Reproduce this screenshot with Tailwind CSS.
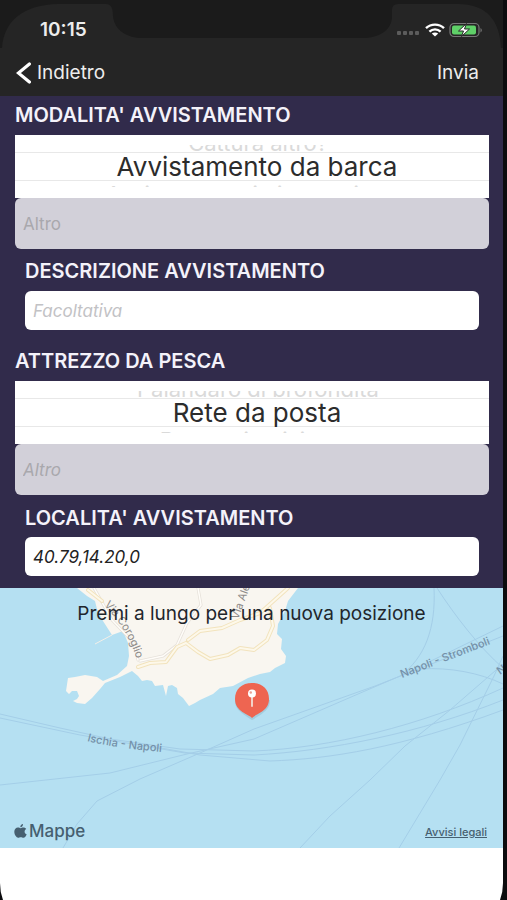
<!DOCTYPE html>
<html lang="it">
<head>
    <meta charset="UTF-8">
    <meta name="viewport" content="width=device-width, initial-scale=1.0">
    <title>Avvistamento</title>
    <script src="https://cdn.jsdelivr.net/npm/@tailwindcss/browser@4"></script>
</head>
<body class="bg-[#0c0c0e] font-['Inter','Liberation_Sans',sans-serif]">
    <div class="relative min-h-screen mr-1 flex flex-col bg-white">

        <!-- Header -->
        <header class="relative bg-[#252525] text-[#ededed]">
            <svg class="absolute inset-x-0 top-0 w-full h-12" viewBox="0 0 503 48" preserveAspectRatio="none" aria-hidden="true">
                <path fill="#1b1b1b" d="M0 0H503V48H501C500 20 486 4 458 4H398Q392 4 392 10V16C392 30 380 38 362 38H140C124 37 114 28 113 16C113 8 111 4 106 4H58C24 5 4 20 2 48H0Z"/>
            </svg>
            <div class="relative h-12 pt-3 pl-10 pr-5 flex items-center justify-between">
                <span class="text-[19px] font-semibold">10:15</span>
                <div class="flex items-center gap-1">
                    <svg width="24" height="14" viewBox="0 0 24 14" fill="#5c5c5c" aria-hidden="true">
                        <rect x="0" y="8" width="4" height="4" rx="1"/>
                        <rect x="6" y="8" width="4" height="4" rx="1"/>
                        <rect x="12" y="8" width="4" height="4" rx="1"/>
                        <rect x="18" y="8" width="4" height="4" rx="1"/>
                    </svg>
                    <svg width="20" height="14" viewBox="0 0 20 14" fill="none" stroke="#fff" stroke-width="2.4" aria-hidden="true">
                        <path d="M1 5.2C6 .4 14 .4 19 5.2"/>
                        <path d="M4.4 8.6C7.6 5.6 12.4 5.6 15.6 8.6"/>
                        <path fill="#fff" stroke="none" d="M10 13.4L6.8 10.5C8.6 9 11.4 9 13.2 10.5Z"/>
                    </svg>
                    <svg width="34" height="16" viewBox="0 0 34 16" aria-hidden="true">
                        <rect x="1" y="1.5" width="29" height="13" rx="4" fill="none" stroke="#777" stroke-width="1.2"/>
                        <rect x="3" y="3.5" width="24" height="9" rx="2" fill="#5fd068"/>
                        <path d="M31.5 6V10.5C33.3 9.6 33.3 6.9 31.5 6Z" fill="#777"/>
                        <path d="M17.5 1.5L9.5 9H14.5L12.5 14.5L20.5 7H15.5Z" fill="#fff" stroke="#252525" stroke-width="1"/>
                    </svg>
                </div>
            </div>
            <nav class="relative h-12 pt-0.5 pl-4 pr-6 flex items-center justify-between">
                <a href="#" class="flex items-center gap-1.5 text-[19px]">
                    <svg width="15" height="22" viewBox="0 0 15 22" fill="none" stroke="#fff" stroke-width="3.2" stroke-linecap="round" stroke-linejoin="miter" aria-hidden="true">
                        <path d="M13.4 2L2.4 11L13.4 20"/>
                    </svg>
                    Indietro
                </a>
                <button type="submit" form="reportForm" class="text-[19px]">Invia</button>
            </nav>
        </header>

        <!-- Form -->
        <form id="reportForm" class="bg-[#312b4b] pl-[15px] pr-3.5 pb-3">
            <h2 id="modeLabel" class="h-[39px] pb-0.5 flex items-center text-xl font-semibold text-[#f4f2fa]">MODALITA' AVVISTAMENTO</h2>
            <div role="listbox" aria-labelledby="modeLabel" class="h-[63px] bg-white text-center whitespace-nowrap overflow-hidden">
                <div role="option" class="h-[18px] pt-2.5 pl-3 border-b border-[#e8e8e8]">
                    <div class="h-1.5 flex items-end justify-center overflow-hidden text-[22px] leading-4 text-[#dadada]">Cattura altro?</div>
                </div>
                <div role="option" aria-selected="true" class="h-7 pl-2.5 border-b border-[#e8e8e8] text-[26px] leading-7 text-[#2c2c2c]">Avvistamento da barca</div>
                <div role="option" class="pt-1">
                    <div class="h-0.5 overflow-hidden text-[22px] leading-[18px] text-[#dadada]">Avvistamento in immersione</div>
                </div>
            </div>
            <input type="text" aria-label="Altra modalità" placeholder="Altro" class="block w-full h-[51px] px-2 rounded-md bg-[#d2d0d9] text-[17px] placeholder:text-[#a9a8ad]">

            <div class="pl-2.5 pr-2.5">
                <label for="description" class="h-[42px] pt-0.5 flex items-center text-xl font-semibold text-[#f4f2fa]">DESCRIZIONE AVVISTAMENTO</label>
                <input type="text" id="description" placeholder="Facoltativa" class="block w-full h-[39px] px-2 rounded-md bg-white text-[17px] italic placeholder:text-[#c2c2c5]">
            </div>

            <h2 id="gearLabel" class="h-[51px] pt-2.5 flex items-center text-xl font-semibold text-[#f4f2fa]">ATTREZZO DA PESCA</h2>
            <div role="listbox" aria-labelledby="gearLabel" class="h-[63px] bg-white text-center whitespace-nowrap overflow-hidden">
                <div role="option" class="h-[18px] pt-2.5 pl-3 border-b border-[#e8e8e8]">
                    <div class="h-1.5 flex items-end justify-center overflow-hidden text-[22px] leading-4 text-[#dadada]">Palangaro di profondità</div>
                </div>
                <div role="option" aria-selected="true" class="h-7 pl-2.5 border-b border-[#e8e8e8] text-[26px] leading-7 text-[#2c2c2c]">Rete da posta</div>
                <div role="option" class="pt-1">
                    <div class="h-0.5 overflow-hidden text-[22px] leading-[18px] text-[#dadada]">Rete a circuizione</div>
                </div>
            </div>
            <input type="text" aria-label="Altro attrezzo" placeholder="Altro" class="block w-full h-[51px] px-2 rounded-md bg-[#d2d0d9] text-[17px] italic placeholder:text-[#a9a8ad]">

            <div class="pl-2.5 pr-2.5">
                <label for="location" class="h-[42px] pt-1 flex items-center text-xl font-semibold text-[#f4f2fa]">LOCALITA' AVVISTAMENTO</label>
                <input type="text" id="location" value="40.79,14.20,0" class="block w-full h-[39px] px-2 rounded-md bg-white text-[17px] italic text-[#222]">
            </div>
        </form>

        <!-- Map -->
        <section class="relative h-[260px] px-3.5 pt-3.5 pb-1 flex flex-col justify-between overflow-hidden bg-[#b5e0f2]">
            <svg class="absolute inset-0 w-full h-full" viewBox="0 0 503 260" preserveAspectRatio="xMidYMid slice" aria-hidden="true">
                <!-- ferry routes -->
                <g fill="none" stroke="#a4cee8" stroke-width="1">
                    <path d="M0 126L60 140L110 151L180 161L254 163C330 160 420 138 503 100"/>
                    <path d="M0 130L80 147L185 165L254 167C330 163 420 145 503 112"/>
                    <path d="M150 158L200 167L270 173C330 171 400 160 503 122"/>
                    <path d="M0 197L110 185L187 166L254 151L365 103L400 88L503 38"/>
                    <path d="M63 260L77 236L97 213L140 191L200 165L254 141L375 98L503 48"/>
                    <path d="M434 0C436 40 425 70 400 88M437 0C455 28 480 60 503 80"/>
                    <path d="M420 81C450 79 480 85 503 96"/>
                    <path d="M300 260L330 228L370 192L405 158L450 122L503 76"/>
                    <path d="M399 260L440 192L460 157L494 88L503 68"/>
                </g>
                <!-- coast -->
                <path fill="#f9f6f0" d="M77 0L87 8L95 13L97 21L103 33L112 47L123 43L128 55L129 68L127 78L117 87L103 93L97 89L85 87L75 89L68 90L66 103L69 106L72 103L77 103L79 108L77 111L73 113L77 115L85 116L92 110L100 101L105 95L120 89L132 83L138 88L142 93L147 92L152 93L155 98L163 97L166 108L168 98L172 97L177 100L178 106L183 110L189 118L195 115L200 112L213 106L220 100L233 98L248 90L260 86L270 84L275 80L285 75L286 68L281 61L282 51L277 46L278 36L285 23L288 13L298 0Z"/>
                <path fill="none" stroke="#f3efe8" stroke-width="1" d="M95 56L112 47"/>
                <!-- roads -->
                <g fill="none" stroke-linejoin="round" stroke-linecap="round">
                    <path stroke="#e6e1da" stroke-width="3" d="M198 0L201 17L187 35L177 57L163 68L140 73M94 0L112 32L134 55L138 72"/>
                    <path stroke="#fffdf9" stroke-width="1.5" d="M198 0L201 17L187 35L177 57L163 68L140 73M94 0L112 32L134 55L138 72"/>
                    <path stroke="#f2e3bd" stroke-width="4" d="M138 79L150 75L166 74L177 59L186 55L198 64L210 71L228 67L240 60L254 62L267 52L273 38L270 20M188 52L200 43L222 40L240 32L260 25L278 9L288 0M88 2L102 13"/>
                    <path stroke="#fdf8ea" stroke-width="2" d="M138 79L150 75L166 74L177 59L186 55L198 64L210 71L228 67L240 60L254 62L267 52L273 38L270 20M188 52L200 43L222 40L240 32L260 25L278 9L288 0M88 2L102 13"/>
                </g>
                <!-- names on the map -->
                <defs>
                    <path id="coroglio" d="M104 17C117 31 128 45 136 69"/>
                    <path id="alessandro" d="M238 32L258 -24"/>
                    <path id="ischia" d="M87 153C110 159 140 162 180 166"/>
                </defs>
                <g font-size="11" fill="#8d8a88">
                    <text><textPath href="#coroglio">Via Coroglio</textPath></text>
                    <text><textPath href="#alessandro">Via Alessandro</textPath></text>
                </g>
                <g font-size="11" font-weight="500" fill="#7490a8">
                    <text><textPath href="#ischia">Ischia - Napoli</textPath></text>
                    <text transform="translate(402 90) rotate(-21)">Napoli - Stromboli</text>
                    <text transform="translate(500 87) rotate(-35)">Napoli</text>
                </g>
                <!-- pin -->
                <path fill="#8fb9cb" opacity=".5" d="M252 132C238 123 235 120 235 112H270C270 121 264 125 252 132Z"/>
                <path fill="#ee6551" d="M252 130C249 126 235 124 235 111C235 101 242 95 252 95C262 95 269 101 269 111C269 124 255 126 252 130Z"/>
                <path stroke="#f3d3c8" stroke-width="2" stroke-linecap="round" d="M252 107V118"/>
                <circle cx="252" cy="105.5" r="4" fill="#fff"/>
                <circle cx="250.8" cy="104.5" r="1.2" fill="#e9a194"/>
            </svg>
            <p class="relative text-center text-[19px] leading-6 text-[#1f262c]">Premi a lungo per una nuova posizione</p>
            <div class="relative flex items-center justify-between pr-0.5 text-[#465f70]">
                <span class="flex items-center gap-0.5 text-[17px] font-medium">
                    <svg width="13" height="14" viewBox="0 0 13 14" fill="currentColor" aria-hidden="true">
                        <path d="M9 0C9.2 1.9 7.9 3.2 6.3 3.2C6.1 1.6 7.6 .2 9 0Z"/>
                        <path d="M6.6 4.2C7.3 4.2 8 3.5 9.4 3.5C10.6 3.5 11.6 4.1 12.2 4.9C9.9 6.2 10.2 9.4 12.7 10.3C12.1 12 10.8 13.8 9.4 13.8C8.4 13.8 8 13.2 6.8 13.2C5.6 13.2 5.1 13.8 4.2 13.8C2.4 13.8 .3 10.7 .3 7.8C.3 5.2 2 3.6 3.9 3.6C5.1 3.6 5.9 4.2 6.6 4.2Z"/>
                    </svg>
                    Mappe
                </span>
                <a href="#" class="pt-0.5 text-[11px] font-medium underline">Avvisi legali</a>
            </div>
        </section>

        <!-- Rounded lower edge of the screen -->
        <div class="flex-1 min-h-[52px] flex items-end justify-between">
            <svg width="3" height="17" viewBox="0 0 3 17" fill="#0c0c0e" aria-hidden="true"><path d="M0 0Q0 9 3 17H0Z"/></svg>
            <svg width="3" height="17" viewBox="0 0 3 17" fill="#0c0c0e" aria-hidden="true"><path d="M3 0Q3 9 0 17H3Z"/></svg>
        </div>
    </div>
</body>
</html>
